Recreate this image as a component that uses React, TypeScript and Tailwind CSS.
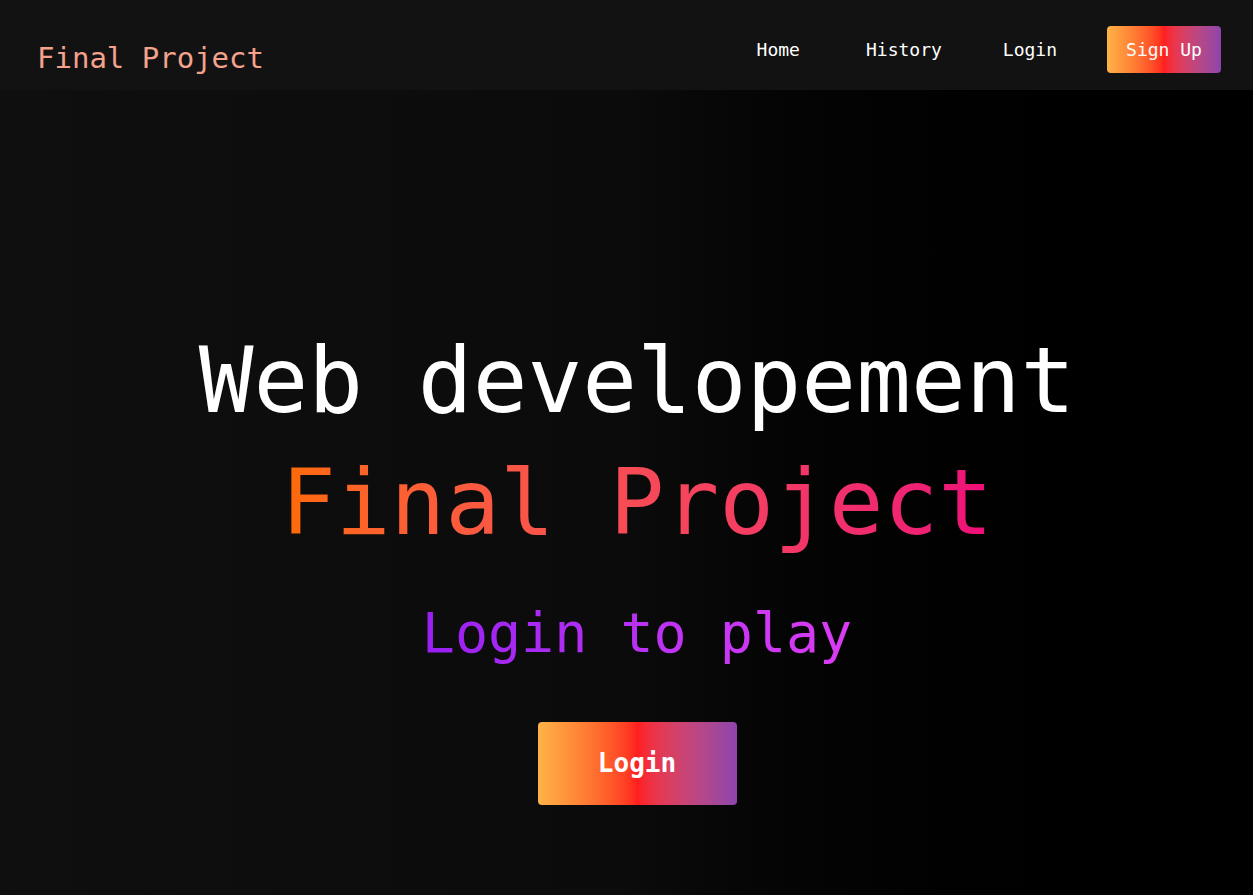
import React from "react";

const mono = { fontFamily: '"DejaVu Sans Mono", "Liberation Mono", monospace' };

export default function App() {
  return (
    <div className="flex h-[895px] w-full flex-col overflow-hidden bg-black" style={mono}>
      <nav className="flex h-[90px] shrink-0 items-start bg-[#121212] pl-[37px] pr-[32px]">
        <div className="mt-[41px] text-[29px] leading-[34px] text-[#f4a28c]">Final Project</div>
        <div className="ml-auto mt-[26px] flex items-center text-[18px] text-white">
          <a className="leading-[21px]">Home</a>
          <a className="ml-[66px] leading-[21px]">History</a>
          <a className="ml-[61px] leading-[21px]">Login</a>
          <button className="ml-[50px] flex h-[47px] w-[114px] items-center justify-center rounded-[4px] bg-linear-to-r from-[#ffb347] via-[#ff1e1e] to-[#8e44ad] text-[18px] leading-[21px] text-white">
            Sign Up
          </button>
        </div>
      </nav>
      <main className="flex flex-1 flex-col items-center bg-linear-to-r from-[#0f0f0f] via-[#0b0b0b] to-black pl-[21px] pt-[230px]">
        <h1 className="text-[91px] font-normal leading-[122px] text-white">Web developement</h1>
        <h2 className="inline-block bg-linear-to-r from-[#ff6a00] to-[#ee0979] bg-clip-text text-[91px] font-normal leading-[122px] text-transparent">
          Final Project
        </h2>
        <p className="mt-[34px] inline-block bg-linear-to-r from-[#981ef2] to-[#db3cf4] bg-clip-text text-[55px] leading-[70px] text-transparent">
          Login to play
        </p>
        <button className="mt-[54px] flex h-[83px] w-[199px] items-center justify-center rounded-[4px] bg-linear-to-r from-[#ffb347] via-[#ff1e1e] to-[#8e44ad] text-[26px] font-semibold text-white">
          Login
        </button>
      </main>
    </div>
  );
}
